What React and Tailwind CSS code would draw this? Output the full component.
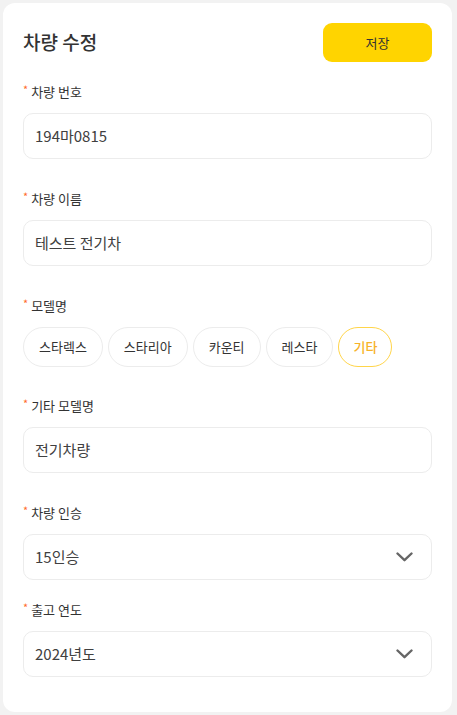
import React, { useState } from 'react';

const models = ['스타렉스', '스타리아', '카운티', '레스타', '기타'];

const Label = ({ children }) => (
    <div className="flex items-center h-[18px] text-[13px] text-[#333] leading-none">
        <span className="text-[#ff6a2b] text-[11px] mr-[3px] -mt-[4px]">*</span>
        {children}
    </div>
);

const Field = ({ value }) => (
    <div className="h-[46px] mt-[13px] rounded-[10px] border border-[#ececec] flex items-center px-[11px] text-[15px] text-[#404040]">
        {value}
    </div>
);

const Select = ({ value }) => (
    <div className="h-[46px] mt-[13px] rounded-[10px] border border-[#ececec] flex items-center justify-between pl-[11px] pr-[18px] text-[15px] text-[#404040]">
        <span>{value}</span>
        <svg width="17" height="10" viewBox="0 0 17 10" fill="none">
            <path d="M1.5 1.5 L8.5 8.2 L15.5 1.5" stroke="#666" strokeWidth="2.4" strokeLinecap="round" strokeLinejoin="round" />
        </svg>
    </div>
);

export default function App() {
    const [model, setModel] = useState('기타');

    return (
        <div
            className="min-h-[715px] bg-[#f2f2f2] pt-[3px] pl-[3px] pr-[5px]"
            style={{ fontFamily: '"Noto Sans CJK KR", "Noto Sans", sans-serif' }}
        >
            <div className="bg-white rounded-[12px] px-[20px] pt-[20px] pb-[35px]">
                {/* Header */}
                <div className="flex items-center justify-between h-[39px]">
                    <h1 className="text-[19px] font-medium text-[#333]">차량 수정</h1>
                    <button className="w-[109px] h-[39px] rounded-[9px] bg-[#ffd400] text-[13px] text-[#333]">
                        저장
                    </button>
                </div>

                <div className="mt-[20px]">
                    <Label>차량 번호</Label>
                    <Field value="194마0815" />
                </div>

                <div className="mt-[30px]">
                    <Label>차량 이름</Label>
                    <Field value="테스트 전기차" />
                </div>

                <div className="mt-[30px]">
                    <Label>모델명</Label>
                    <div className="flex gap-[5px] mt-[13px]">
                        {models.map((m) => (
                            <button
                                key={m}
                                onClick={() => setModel(m)}
                                className={
                                    m === model
                                        ? 'h-[40px] px-[14px] rounded-full border border-[#ffd54a] text-[13px] text-[#f7b228] font-medium'
                                        : 'h-[40px] px-[15px] rounded-full border border-[#ececec] text-[13px] text-[#333]'
                                }
                            >
                                {m}
                            </button>
                        ))}
                    </div>
                </div>

                <div className="mt-[29px]">
                    <Label>기타 모델명</Label>
                    <Field value="전기차량" />
                </div>

                <div className="mt-[30px]">
                    <Label>차량 인승</Label>
                    <Select value="15인승" />
                </div>

                <div className="mt-[20px]">
                    <Label>출고 연도</Label>
                    <Select value="2024년도" />
                </div>
            </div>
        </div>
    );
}
